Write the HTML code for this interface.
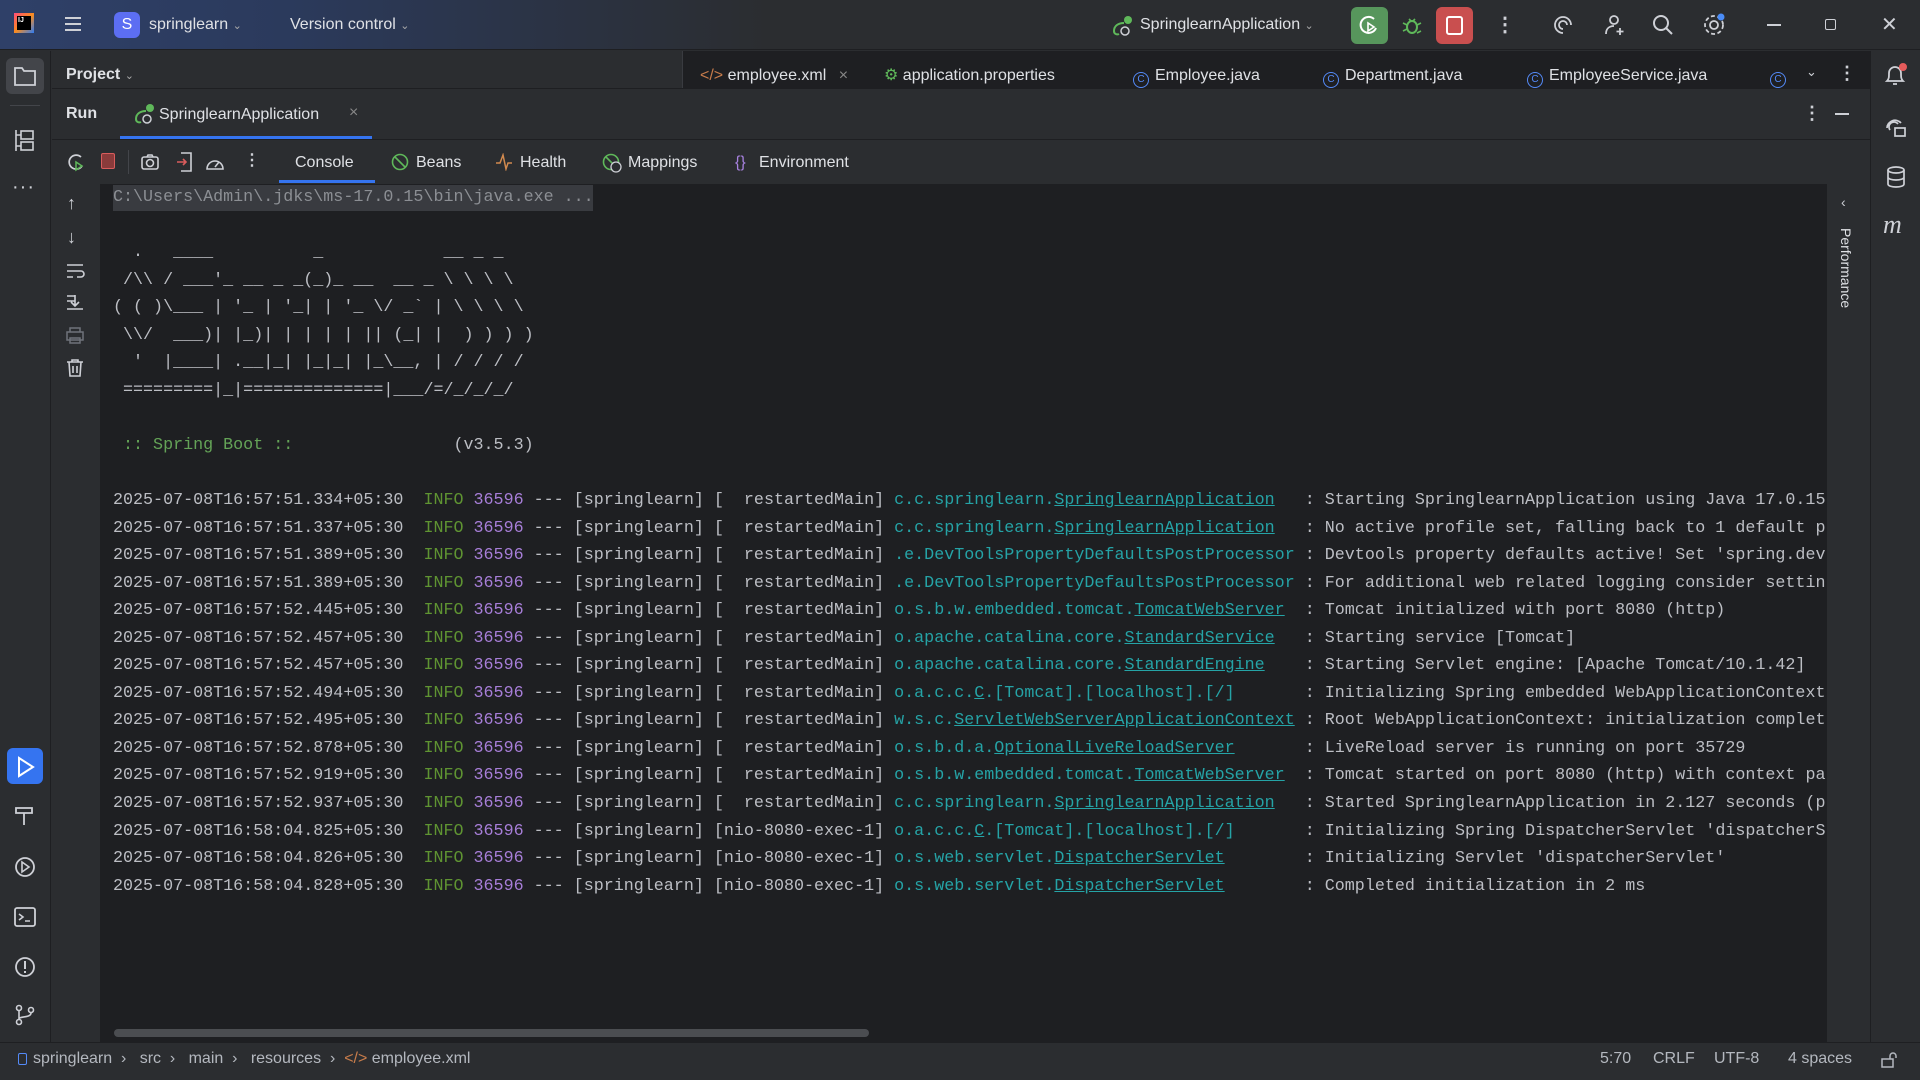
<!DOCTYPE html>
<html><head><meta charset="utf-8"><style>
*{margin:0;padding:0;box-sizing:border-box}
body{width:1920px;height:1080px;overflow:hidden;background:#2b2d30;font-family:"Liberation Sans",sans-serif;color:#dfe1e5;font-size:16px;position:relative}
.a{position:absolute;white-space:nowrap}
.title{left:0;top:0;width:1920px;height:50px;background:linear-gradient(90deg,#2f4068 0%,#2b3a5c 15%,#2b2d30 40%);border-bottom:1px solid #1e1f22}
pre{position:absolute;left:113px;top:184px;width:1713px;overflow:hidden;font-family:"Liberation Mono",monospace;font-size:16.7px;line-height:27.55px;color:#bcbec4;white-space:pre}
.g{color:#5f9432}.p{color:#a77ed8}.t{color:#25a3a6}.u{text-decoration:underline;text-decoration-color:#25a3a6}
.sb{color:#64a357}
.tb{font-size:16px;color:#dfe1e5;line-height:20px}
.ci{display:inline-block;width:16px;height:16px;border:1.5px solid #548af7;border-radius:50%;color:#548af7;font-size:10px;line-height:13px;text-align:center;vertical-align:-2px;margin-right:6px}
</style></head><body>
<div class="a title"></div>
<div class="a" style="left:14px;top:13px;width:20px;height:20px;background:linear-gradient(135deg,#ff4c7a,#fa8c1e,#2c7cf6)"></div>
<div class="a" style="left:17px;top:16px;width:14px;height:14px;background:#000;color:#fff;font-size:7px;font-weight:bold;padding:1px">IJ</div>
<svg class="a" style="left:64px;top:15px" width="18" height="18"><path d="M1 3h16M1 9h16M1 15h16" stroke="#ced0d6" stroke-width="2"/></svg>
<div class="a" style="left:114px;top:12px;width:26px;height:26px;border-radius:6px;background:#5c6ef2;color:#fff;font-size:16px;text-align:center;line-height:26px">S</div>
<div class="a tb" style="left:149px;top:15px">springlearn <span style="font-size:11px;color:#aaa">&#8964;</span></div>
<div class="a tb" style="left:290px;top:15px">Version control <span style="font-size:11px;color:#aaa">&#8964;</span></div>
<div class="a" style="left:1112px;top:15px;width:20px;height:20px;"><svg width="22" height="22"><circle cx="16" cy="5" r="4" fill="#5fb85a"/><path d="M12 8c-6 0-10 3-10 8 0 3 3 4 5 3" stroke="#5fb85a" stroke-width="2" fill="none"/><circle cx="13" cy="16" r="4" stroke="#ced0d6" stroke-width="1.5" fill="none"/></svg></div>
<div class="a tb" style="left:1140px;top:15px">SpringlearnApplication <span style="font-size:11px;color:#aaa">&#8964;</span></div>
<div class="a" style="left:1351px;top:7px;width:37px;height:37px;border-radius:6px;background:#57965c"></div>
<svg class="a" style="left:1358px;top:14px" width="24" height="24"><path d="M16 5a8 8 0 1 0 2 9" stroke="#fff" stroke-width="2" fill="none"/><path d="M10 9v8l6-4z" stroke="#fff" stroke-width="1.6" fill="none"/></svg>
<svg class="a" style="left:1401px;top:14px" width="22" height="22"><ellipse cx="11" cy="13" rx="5" ry="6" stroke="#5fb85a" stroke-width="2" fill="none"/><path d="M2 9l4 2M20 9l-4 2M2 17l4-2M20 17l-4 2M8 5l2 2M14 5l-2 2" stroke="#5fb85a" stroke-width="1.6"/></svg>
<div class="a" style="left:1436px;top:7px;width:37px;height:37px;border-radius:6px;background:#c94f4f"></div>
<div class="a" style="left:1446px;top:16px;width:17px;height:19px;border:2px solid #fff;border-radius:3px"></div>
<div class="a" style="left:1495px;top:12px;color:#ced0d6;font-size:20px;font-weight:bold">&#8942;</div>
<svg class="a" style="left:1551px;top:13px" width="24" height="24"><path d="M12 20a8 8 0 1 1 8-8M12 16a4 4 0 1 1 4-4" stroke="#ced0d6" stroke-width="1.8" fill="none"/></svg>
<svg class="a" style="left:1603px;top:13px" width="24" height="24"><circle cx="11" cy="7" r="4" stroke="#ced0d6" stroke-width="1.8" fill="none"/><path d="M3 21c0-5 3-8 8-8M17 15v7M13.5 18.5h7" stroke="#ced0d6" stroke-width="1.8" fill="none"/></svg>
<svg class="a" style="left:1651px;top:13px" width="24" height="24"><circle cx="10" cy="10" r="7" stroke="#ced0d6" stroke-width="2" fill="none"/><path d="M15 15l6 6" stroke="#ced0d6" stroke-width="2"/></svg>
<svg class="a" style="left:1702px;top:13px" width="24" height="24"><circle cx="12" cy="12" r="4" stroke="#ced0d6" stroke-width="1.8" fill="none"/><circle cx="12" cy="12" r="9" stroke="#ced0d6" stroke-width="1.8" stroke-dasharray="4 2.5" fill="none"/><circle cx="19" cy="4" r="3.5" fill="#4a8cf7"/></svg>
<div class="a" style="left:1767px;top:24px;width:14px;height:1.5px;background:#ced0d6"></div>
<div class="a" style="left:1825px;top:19px;width:11px;height:11px;border:1.5px solid #ced0d6;border-radius:2px"></div>
<div class="a" style="left:1881px;top:12px;color:#ced0d6;font-size:20px">&#10005;</div>

<div class="a" style="left:0;top:51px;width:51px;height:991px;background:#2b2d30;border-right:1px solid #1e1f22"></div>
<div class="a" style="left:6px;top:58px;width:38px;height:36px;border-radius:6px;background:#43454a"></div>
<svg class="a" style="left:13px;top:65px" width="24" height="22"><path d="M2 3h7l2 3h11v14H2z" stroke="#ced0d6" stroke-width="1.8" fill="none"/></svg>
<div class="a" style="left:10px;top:105px;width:30px;height:1px;background:#43454a"></div>
<svg class="a" style="left:14px;top:129px" width="22" height="24"><rect x="7" y="2" width="12" height="8" stroke="#ced0d6" stroke-width="1.6" fill="none"/><rect x="7" y="13" width="12" height="8" stroke="#ced0d6" stroke-width="1.6" fill="none"/><path d="M2 1v21M2 6h5M2 17h5" stroke="#ced0d6" stroke-width="1.6"/></svg>
<div class="a" style="left:12px;top:176px;color:#ced0d6;font-size:20px;letter-spacing:1px">&middot;&middot;&middot;</div>
<div class="a" style="left:7px;top:748px;width:36px;height:36px;border-radius:6px;background:#3574f0"></div>
<svg class="a" style="left:15px;top:756px" width="22" height="22"><path d="M4 2l14 9-14 9z" stroke="#fff" stroke-width="2" fill="none"/></svg>
<svg class="a" style="left:14px;top:805px" width="22" height="22"><path d="M2 3h16v5H2zM10 8v12" stroke="#ced0d6" stroke-width="1.8" fill="none"/></svg>
<svg class="a" style="left:14px;top:856px" width="22" height="22"><circle cx="11" cy="11" r="9" stroke="#ced0d6" stroke-width="1.8" fill="none"/><path d="M8 6l7 5-7 5z" stroke="#ced0d6" stroke-width="1.6" fill="none"/></svg>
<svg class="a" style="left:14px;top:906px" width="22" height="22"><rect x="1" y="2" width="20" height="18" rx="2" stroke="#ced0d6" stroke-width="1.8" fill="none"/><path d="M5 8l4 3-4 3M11 15h5" stroke="#ced0d6" stroke-width="1.6" fill="none"/></svg>
<svg class="a" style="left:14px;top:956px" width="22" height="22"><circle cx="11" cy="11" r="9" stroke="#ced0d6" stroke-width="1.8" fill="none"/><path d="M11 5v8M11 15v2" stroke="#ced0d6" stroke-width="2"/></svg>
<svg class="a" style="left:14px;top:1004px" width="22" height="22"><circle cx="5" cy="4" r="2.5" stroke="#ced0d6" stroke-width="1.6" fill="none"/><circle cx="5" cy="18" r="2.5" stroke="#ced0d6" stroke-width="1.6" fill="none"/><circle cx="17" cy="6" r="2.5" stroke="#ced0d6" stroke-width="1.6" fill="none"/><path d="M5 7v8M17 9c0 5-12 3-12 6" stroke="#ced0d6" stroke-width="1.6" fill="none"/></svg>

<div class="a" style="left:1870px;top:51px;width:50px;height:991px;background:#2b2d30;border-left:1px solid #1e1f22"></div>
<svg class="a" style="left:1883px;top:62px" width="26" height="28"><path d="M4 19c2-2 2-4 2-8a6 6 0 0 1 12 0c0 4 0 6 2 8zM10 22h4" stroke="#ced0d6" stroke-width="1.8" fill="none"/><circle cx="20" cy="5" r="4" fill="#e55b5b"/></svg>
<svg class="a" style="left:1884px;top:116px" width="24" height="24"><path d="M3 12a8 8 0 0 1 14-5M6 14a5 5 0 0 1 8-6" stroke="#ced0d6" stroke-width="1.7" fill="none"/><rect x="11" y="12" width="10" height="8" stroke="#ced0d6" stroke-width="1.7" fill="none"/></svg>
<svg class="a" style="left:1885px;top:165px" width="22" height="24"><ellipse cx="11" cy="5" rx="8" ry="3" stroke="#ced0d6" stroke-width="1.7" fill="none"/><path d="M3 5v14c0 2 4 3 8 3s8-1 8-3V5M3 12c0 2 4 3 8 3s8-1 8-3" stroke="#ced0d6" stroke-width="1.7" fill="none"/></svg>
<div class="a" style="left:1883px;top:210px;color:#ced0d6;font-size:26px;font-style:italic;font-family:'Liberation Serif',serif">m</div>

<div class="a" style="left:52px;top:51px;width:630px;height:37px;background:#2b2d30"></div>
<div class="a" style="left:66px;top:66px;font-weight:bold;font-size:16px;color:#dfe1e5">Project <span style="font-weight:normal;font-size:11px;color:#aaa">&#8964;</span></div>
<div class="a" style="left:682px;top:51px;width:1188px;height:37px;background:#1e1f22;border-left:1px solid #393b40"></div>
<div class="a tb" style="left:700px;top:66px"><span style="color:#c77c4b">&lt;/&gt;</span> employee.xml <span style="color:#888;margin-left:8px">&#215;</span></div>
<div class="a tb" style="left:884px;top:66px"><span style="color:#5fb85a">&#9881;</span> application.properties</div>
<div class="a tb" style="left:1133px;top:66px"><span class="ci">C</span>Employee.java</div>
<div class="a tb" style="left:1323px;top:66px"><span class="ci">C</span>Department.java</div>
<div class="a tb" style="left:1527px;top:66px"><span class="ci">C</span>EmployeeService.java</div>
<div class="a tb" style="left:1770px;top:66px"><span class="ci">C</span></div>
<div class="a" style="left:1806px;top:64px;color:#ced0d6;font-size:13px">&#8964;</div>
<div class="a" style="left:1838px;top:63px;color:#ced0d6;font-size:18px;font-weight:bold">&#8942;</div>

<div class="a" style="left:52px;top:88px;width:1818px;height:52px;background:#2b2d30;border-top:1px solid #1e1f22;border-bottom:1px solid #1e1f22"></div>
<div class="a" style="left:66px;top:105px;font-weight:bold;font-size:16px">Run</div>
<svg class="a" style="left:134px;top:103px" width="22" height="22"><circle cx="16" cy="5" r="4" fill="#5fb85a"/><path d="M12 8c-6 0-10 3-10 8 0 3 3 4 5 3" stroke="#5fb85a" stroke-width="2" fill="none"/><circle cx="13" cy="16" r="4" stroke="#ced0d6" stroke-width="1.5" fill="none"/></svg>
<div class="a tb" style="left:159px;top:105px">SpringlearnApplication</div>
<div class="a" style="left:349px;top:104px;color:#888;font-size:16px">&#215;</div>
<div class="a" style="left:120px;top:136px;width:252px;height:3px;background:#3574f0"></div>
<div class="a" style="left:1803px;top:103px;color:#ced0d6;font-size:18px;font-weight:bold">&#8942;</div>
<div class="a" style="left:1835px;top:113px;width:14px;height:1.5px;background:#ced0d6"></div>

<div class="a" style="left:52px;top:140px;width:1818px;height:44px;background:#2b2d30"></div>
<svg class="a" style="left:66px;top:152px" width="20" height="20"><path d="M15 5a7 7 0 1 0 1 9" stroke="#ced0d6" stroke-width="1.7" fill="none"/><path d="M10 10v8l6-4z" stroke="#5fb85a" stroke-width="1.5" fill="none"/></svg>
<div class="a" style="left:101px;top:153px;width:14px;height:16px;border:1.5px solid #d95c5c;background:#8a3b3b;border-radius:2px"></div>
<div class="a" style="left:128px;top:150px;width:1px;height:24px;background:#43454a"></div>
<svg class="a" style="left:140px;top:152px" width="20" height="20"><rect x="2" y="5" width="16" height="12" rx="2" stroke="#ced0d6" stroke-width="1.6" fill="none"/><circle cx="10" cy="11" r="3.5" stroke="#ced0d6" stroke-width="1.6" fill="none"/><path d="M7 5l1-2h4l1 2" stroke="#ced0d6" stroke-width="1.6" fill="none"/></svg>
<svg class="a" style="left:175px;top:151px" width="20" height="22"><path d="M6 2h10v18H6" stroke="#ced0d6" stroke-width="1.6" fill="none"/><path d="M2 11h9M8 8l3 3-3 3" stroke="#d95c5c" stroke-width="1.6" fill="none"/></svg>
<svg class="a" style="left:204px;top:152px" width="22" height="22"><path d="M3 17a8 8 0 1 1 16 0z" stroke="#ced0d6" stroke-width="1.6" fill="none"/><path d="M11 15l4-5" stroke="#ced0d6" stroke-width="1.6"/></svg>
<div class="a" style="left:244px;top:150px;color:#ced0d6;font-size:16px;font-weight:bold">&#8942;</div>
<div class="a tb" style="left:295px;top:153px">Console</div>
<div class="a" style="left:279px;top:180px;width:96px;height:3px;background:#3574f0"></div>
<svg class="a" style="left:391px;top:153px" width="18" height="18"><circle cx="9" cy="9" r="7.5" stroke="#5fb85a" stroke-width="1.6" fill="none"/><path d="M4 4l10 10" stroke="#5fb85a" stroke-width="1.6"/></svg>
<div class="a tb" style="left:416px;top:153px">Beans</div>
<svg class="a" style="left:495px;top:153px" width="18" height="18"><path d="M1 10h4l3-8 3 14 2-6h4" stroke="#d18a4f" stroke-width="1.5" fill="none"/></svg>
<div class="a tb" style="left:520px;top:153px">Health</div>
<svg class="a" style="left:602px;top:153px" width="20" height="20"><circle cx="9" cy="9" r="7.5" stroke="#5fb85a" stroke-width="1.6" fill="none"/><path d="M4 4l10 10" stroke="#5fb85a" stroke-width="1.6"/><circle cx="14" cy="14" r="5" fill="#2b2d30" stroke="#ced0d6" stroke-width="1.3"/></svg>
<div class="a tb" style="left:628px;top:153px">Mappings</div>
<div class="a tb" style="left:735px;top:153px;color:#a882e0">{}</div>
<div class="a tb" style="left:759px;top:153px">Environment</div>

<div class="a" style="left:52px;top:184px;width:49px;height:858px;background:#2b2d30;border-right:1px solid #1e1f22"></div>
<div class="a" style="left:67px;top:193px;color:#ced0d6;font-size:18px">&#8593;</div>
<div class="a" style="left:67px;top:227px;color:#ced0d6;font-size:18px">&#8595;</div>
<svg class="a" style="left:65px;top:262px" width="20" height="18"><path d="M2 3h16M2 9h14a3 3 0 0 1 0 6h-4M2 15h6" stroke="#ced0d6" stroke-width="1.6" fill="none"/></svg>
<svg class="a" style="left:65px;top:293px" width="20" height="18"><path d="M2 3h8M2 8h8M10 2v10M6 9l4 4 4-4M2 16h16" stroke="#ced0d6" stroke-width="1.6" fill="none"/></svg>
<svg class="a" style="left:65px;top:326px" width="20" height="18"><rect x="2" y="6" width="16" height="8" stroke="#6f737a" stroke-width="1.5" fill="none"/><path d="M5 6V2h10v4M5 12h10v5H5z" stroke="#6f737a" stroke-width="1.5" fill="none"/></svg>
<svg class="a" style="left:65px;top:358px" width="20" height="20"><path d="M2 4h16M7 4V2h6v2M4 4l1 14h10l1-14M8 8v7M12 8v7" stroke="#ced0d6" stroke-width="1.6" fill="none"/></svg>

<div class="a" style="left:101px;top:184px;width:1725px;height:858px;background:#1e1f22"></div>
<div class="a" style="left:113px;top:185px;width:480px;height:26px;background:#393b40"></div>
<pre><span style="color:#8c8f94">C:\Users\Admin\.jdks\ms-17.0.15\bin\java.exe ...</span>

  .   ____          _            __ _ _
 /\\ / ___'_ __ _ _(_)_ __  __ _ \ \ \ \
( ( )\___ | '_ | '_| | '_ \/ _` | \ \ \ \
 \\/  ___)| |_)| | | | | || (_| |  ) ) ) )
  '  |____| .__|_| |_|_| |_\__, | / / / /
 =========|_|==============|___/=/_/_/_/

<span class="sb"> :: Spring Boot :: </span>               (v3.5.3)

2025-07-08T16:57:51.334+05:30  <span class="g">INFO</span> <span class="p">36596</span> --- [springlearn] [  restartedMain] <span class="t">c.c.springlearn.<span class="u">SpringlearnApplication</span></span>   : Starting SpringlearnApplication using Java 17.0.15 with PID 36596
2025-07-08T16:57:51.337+05:30  <span class="g">INFO</span> <span class="p">36596</span> --- [springlearn] [  restartedMain] <span class="t">c.c.springlearn.<span class="u">SpringlearnApplication</span></span>   : No active profile set, falling back to 1 default profile
2025-07-08T16:57:51.389+05:30  <span class="g">INFO</span> <span class="p">36596</span> --- [springlearn] [  restartedMain] <span class="t">.e.DevToolsPropertyDefaultsPostProcessor</span> : Devtools property defaults active! Set 'spring.devtools'
2025-07-08T16:57:51.389+05:30  <span class="g">INFO</span> <span class="p">36596</span> --- [springlearn] [  restartedMain] <span class="t">.e.DevToolsPropertyDefaultsPostProcessor</span> : For additional web related logging consider setting
2025-07-08T16:57:52.445+05:30  <span class="g">INFO</span> <span class="p">36596</span> --- [springlearn] [  restartedMain] <span class="t">o.s.b.w.embedded.tomcat.<span class="u">TomcatWebServer</span></span>  : Tomcat initialized with port 8080 (http)
2025-07-08T16:57:52.457+05:30  <span class="g">INFO</span> <span class="p">36596</span> --- [springlearn] [  restartedMain] <span class="t">o.apache.catalina.core.<span class="u">StandardService</span></span>   : Starting service [Tomcat]
2025-07-08T16:57:52.457+05:30  <span class="g">INFO</span> <span class="p">36596</span> --- [springlearn] [  restartedMain] <span class="t">o.apache.catalina.core.<span class="u">StandardEngine</span></span>    : Starting Servlet engine: [Apache Tomcat/10.1.42]
2025-07-08T16:57:52.494+05:30  <span class="g">INFO</span> <span class="p">36596</span> --- [springlearn] [  restartedMain] <span class="t">o.a.c.c.<span class="u">C</span>.[Tomcat].[localhost].[/]</span>       : Initializing Spring embedded WebApplicationContext
2025-07-08T16:57:52.495+05:30  <span class="g">INFO</span> <span class="p">36596</span> --- [springlearn] [  restartedMain] <span class="t">w.s.c.<span class="u">ServletWebServerApplicationContext</span></span> : Root WebApplicationContext: initialization completed
2025-07-08T16:57:52.878+05:30  <span class="g">INFO</span> <span class="p">36596</span> --- [springlearn] [  restartedMain] <span class="t">o.s.b.d.a.<span class="u">OptionalLiveReloadServer</span></span>       : LiveReload server is running on port 35729
2025-07-08T16:57:52.919+05:30  <span class="g">INFO</span> <span class="p">36596</span> --- [springlearn] [  restartedMain] <span class="t">o.s.b.w.embedded.tomcat.<span class="u">TomcatWebServer</span></span>  : Tomcat started on port 8080 (http) with context path
2025-07-08T16:57:52.937+05:30  <span class="g">INFO</span> <span class="p">36596</span> --- [springlearn] [  restartedMain] <span class="t">c.c.springlearn.<span class="u">SpringlearnApplication</span></span>   : Started SpringlearnApplication in 2.127 seconds (process
2025-07-08T16:58:04.825+05:30  <span class="g">INFO</span> <span class="p">36596</span> --- [springlearn] [nio-8080-exec-1] <span class="t">o.a.c.c.<span class="u">C</span>.[Tomcat].[localhost].[/]</span>       : Initializing Spring DispatcherServlet 'dispatcherServlet'
2025-07-08T16:58:04.826+05:30  <span class="g">INFO</span> <span class="p">36596</span> --- [springlearn] [nio-8080-exec-1] <span class="t">o.s.web.servlet.<span class="u">DispatcherServlet</span></span>        : Initializing Servlet 'dispatcherServlet'
2025-07-08T16:58:04.828+05:30  <span class="g">INFO</span> <span class="p">36596</span> --- [springlearn] [nio-8080-exec-1] <span class="t">o.s.web.servlet.<span class="u">DispatcherServlet</span></span>        : Completed initialization in 2 ms</pre>
<div class="a" style="left:114px;top:1029px;width:755px;height:8px;border-radius:4px;background:#4b4d51"></div>

<div class="a" style="left:1826px;top:184px;width:44px;height:858px;background:#2b2d30;border-left:1px solid #1e1f22"></div>
<div class="a" style="left:1841px;top:194px;color:#ced0d6;font-size:14px">&#8249;</div>
<div class="a" style="left:1838px;top:228px;writing-mode:vertical-rl;font-size:14px;color:#dfe1e5">Performance</div>

<div class="a" style="left:0;top:1042px;width:1920px;height:38px;background:#2b2d30;border-top:1px solid #1e1f22"></div>
<div class="a" style="left:18px;top:1053px;width:9px;height:12px;border:1.5px solid #548af7;border-radius:2px"></div>
<div class="a" style="left:33px;top:1050px;font-size:16px;color:#b4b8bf">springlearn &nbsp;&#8250;&nbsp;&nbsp; src &nbsp;&#8250;&nbsp;&nbsp; main &nbsp;&#8250;&nbsp;&nbsp; resources &nbsp;&#8250;&nbsp; <span style="color:#c77c4b">&lt;/&gt;</span> employee.xml</div>
<div class="a" style="left:1600px;top:1050px;font-size:16px;color:#b4b8bf">5:70</div>
<div class="a" style="left:1653px;top:1050px;font-size:16px;color:#b4b8bf">CRLF</div>
<div class="a" style="left:1714px;top:1050px;font-size:16px;color:#b4b8bf">UTF-8</div>
<div class="a" style="left:1788px;top:1050px;font-size:16px;color:#b4b8bf">4 spaces</div>
<svg class="a" style="left:1880px;top:1051px" width="18" height="18"><rect x="2" y="8" width="11" height="8" stroke="#b4b8bf" stroke-width="1.5" fill="none"/><path d="M10 8V5a3 3 0 0 1 6 0v2" stroke="#b4b8bf" stroke-width="1.5" fill="none"/></svg>
</body></html>
